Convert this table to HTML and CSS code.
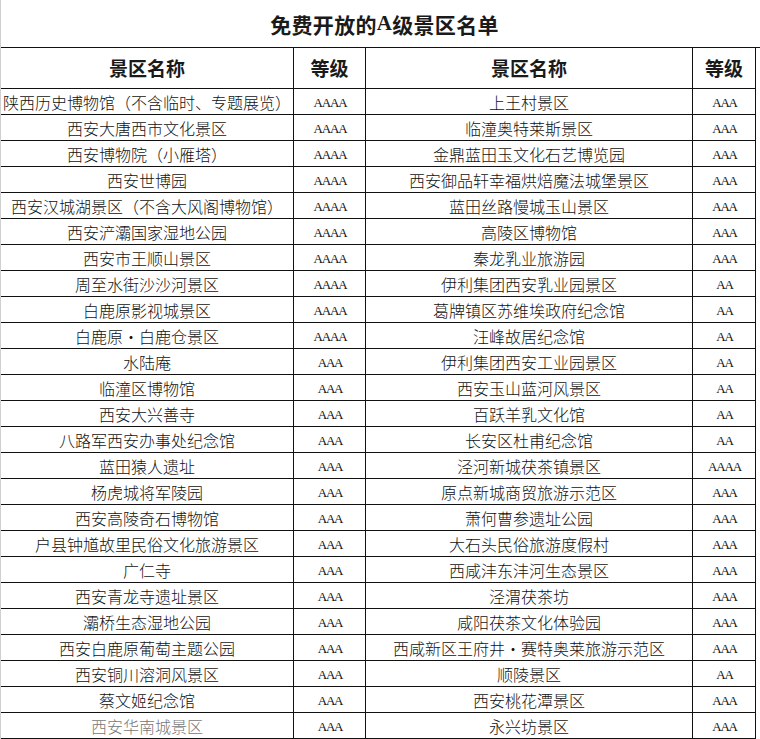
FILE: index.html
```html
<!DOCTYPE html>
<html lang="zh-CN">
<head>
<meta charset="utf-8">
<title>免费开放的A级景区名单</title>
<link rel="stylesheet" href="styles.css">
</head>
<body>
<div class="sheet">
  <div class="title">免费开放的<span class="latin">A</span>级景区名单</div>
  <div class="grid">
    <div class="cell head">景区名称</div><div class="cell head">等级</div><div class="cell head">景区名称</div><div class="cell head">等级</div>

    <div class="cell name">陕西历史博物馆（不含临时、专题展览）</div><div class="cell lvl">AAAA</div><div class="cell name">上王村景区</div><div class="cell lvl">AAA</div>
    <div class="cell name">西安大唐西市文化景区</div><div class="cell lvl">AAAA</div><div class="cell name">临潼奥特莱斯景区</div><div class="cell lvl">AAA</div>
    <div class="cell name">西安博物院（小雁塔）</div><div class="cell lvl">AAAA</div><div class="cell name">金鼎蓝田玉文化石艺博览园</div><div class="cell lvl">AAA</div>
    <div class="cell name">西安世博园</div><div class="cell lvl">AAAA</div><div class="cell name">西安御品轩幸福烘焙魔法城堡景区</div><div class="cell lvl">AAA</div>
    <div class="cell name">西安汉城湖景区（不含大风阁博物馆）</div><div class="cell lvl">AAAA</div><div class="cell name">蓝田丝路慢城玉山景区</div><div class="cell lvl">AAA</div>
    <div class="cell name">西安浐灞国家湿地公园</div><div class="cell lvl">AAAA</div><div class="cell name">高陵区博物馆</div><div class="cell lvl">AAA</div>
    <div class="cell name">西安市王顺山景区</div><div class="cell lvl">AAAA</div><div class="cell name">秦龙乳业旅游园</div><div class="cell lvl">AAA</div>
    <div class="cell name">周至水街沙沙河景区</div><div class="cell lvl">AAAA</div><div class="cell name">伊利集团西安乳业园景区</div><div class="cell lvl">AA</div>
    <div class="cell name">白鹿原影视城景区</div><div class="cell lvl">AAAA</div><div class="cell name">葛牌镇区苏维埃政府纪念馆</div><div class="cell lvl">AA</div>
    <div class="cell name">白鹿原・白鹿仓景区</div><div class="cell lvl">AAAA</div><div class="cell name">汪峰故居纪念馆</div><div class="cell lvl">AA</div>
    <div class="cell name">水陆庵</div><div class="cell lvl">AAA</div><div class="cell name">伊利集团西安工业园景区</div><div class="cell lvl">AA</div>
    <div class="cell name">临潼区博物馆</div><div class="cell lvl">AAA</div><div class="cell name">西安玉山蓝河风景区</div><div class="cell lvl">AA</div>
    <div class="cell name">西安大兴善寺</div><div class="cell lvl">AAA</div><div class="cell name">百跃羊乳文化馆</div><div class="cell lvl">AA</div>
    <div class="cell name">八路军西安办事处纪念馆</div><div class="cell lvl">AAA</div><div class="cell name">长安区杜甫纪念馆</div><div class="cell lvl">AA</div>
    <div class="cell name">蓝田猿人遗址</div><div class="cell lvl">AAA</div><div class="cell name">泾河新城茯茶镇景区</div><div class="cell lvl">AAAA</div>
    <div class="cell name">杨虎城将军陵园</div><div class="cell lvl">AAA</div><div class="cell name">原点新城商贸旅游示范区</div><div class="cell lvl">AAA</div>
    <div class="cell name">西安高陵奇石博物馆</div><div class="cell lvl">AAA</div><div class="cell name">萧何曹参遗址公园</div><div class="cell lvl">AAA</div>
    <div class="cell name">户县钟馗故里民俗文化旅游景区</div><div class="cell lvl">AAA</div><div class="cell name">大石头民俗旅游度假村</div><div class="cell lvl">AAA</div>
    <div class="cell name">广仁寺</div><div class="cell lvl">AAA</div><div class="cell name">西咸沣东沣河生态景区</div><div class="cell lvl">AAA</div>
    <div class="cell name">西安青龙寺遗址景区</div><div class="cell lvl">AAA</div><div class="cell name">泾渭茯茶坊</div><div class="cell lvl">AAA</div>
    <div class="cell name">灞桥生态湿地公园</div><div class="cell lvl">AAA</div><div class="cell name">咸阳茯茶文化体验园</div><div class="cell lvl">AAA</div>
    <div class="cell name">西安白鹿原葡萄主题公园</div><div class="cell lvl">AAA</div><div class="cell name">西咸新区王府井・赛特奥莱旅游示范区</div><div class="cell lvl">AAA</div>
    <div class="cell name">西安铜川溶洞风景区</div><div class="cell lvl">AAA</div><div class="cell name">顺陵景区</div><div class="cell lvl">AA</div>
    <div class="cell name">蔡文姬纪念馆</div><div class="cell lvl">AAA</div><div class="cell name">西安桃花潭景区</div><div class="cell lvl">AAA</div>
    <div class="cell name faded">西安华南城景区</div><div class="cell lvl">AAA</div><div class="cell name">永兴坊景区</div><div class="cell lvl">AAA</div>
  </div>
</div>
</body>
</html>
```

FILE: styles.css
```css
* { box-sizing: border-box; }
html, body { margin: 0; padding: 0; background: #fff; }
body {
  width: 760px;
  height: 739px;
  overflow: hidden;
  font-family: "Noto Sans CJK SC", "Noto Sans", sans-serif;
  color: #1a1a1a;
}
.sheet {
  width: 760px;
  border-left: 1px solid #cfcfcf;
}
.title {
  height: 48px;
  border-bottom: 1px solid #111;
  display: flex;
  align-items: center;
  justify-content: center;
  padding-left: 8px;
  font-size: 21px;
  font-weight: 700;
  color: #1a1a1a;
  letter-spacing: 0.3px;
}
.latin {
  font-family: "Liberation Serif", serif;
  font-weight: 700;
}
.grid {
  display: grid;
  grid-template-columns: 293px 72px 327px 63px;
  grid-template-rows: 41px repeat(25, 26px);
}
.cell {
  border-right: 1px solid #111;
  border-bottom: 1px solid #111;
  display: flex;
  align-items: center;
  justify-content: center;
  white-space: nowrap;
  overflow: hidden;
}
.head {
  font-size: 19px;
  font-weight: 700;
  color: #1a1a1a;
  padding-bottom: 1px;
}
.name {
  font-size: 16px;
  font-weight: 300;
  line-height: 1;
  color: #111;
}
.lvl {
  font-family: "Liberation Serif", serif;
  font-size: 13px;
  letter-spacing: -1.2px;
  color: #111;
  padding-top: 2px;
  padding-left: 1px;
}
.faded { color: #777; }
```
